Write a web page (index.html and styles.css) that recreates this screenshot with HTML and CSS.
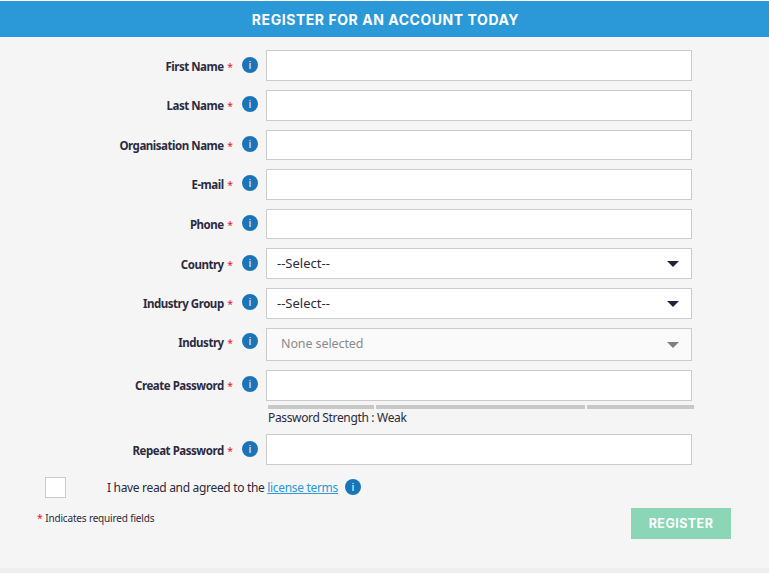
FILE: index.html
```html
<!DOCTYPE html>
<html lang="en">
<head>
<meta charset="utf-8">
<title>Register</title>
<link rel="stylesheet" href="styles.css">
</head>
<body>
<main class="panel">
  <h1 class="title">REGISTER FOR AN ACCOUNT TODAY</h1>
  <form class="form">
    <div class="row"><label class="label">First Name <span class="req">*</span></label><span class="info">i</span><input class="field" type="text"></div>
    <div class="row"><label class="label">Last Name <span class="req">*</span></label><span class="info">i</span><input class="field" type="text"></div>
    <div class="row"><label class="label">Organisation Name <span class="req">*</span></label><span class="info">i</span><input class="field" type="text"></div>
    <div class="row"><label class="label">E-mail <span class="req">*</span></label><span class="info">i</span><input class="field" type="text"></div>
    <div class="row"><label class="label">Phone <span class="req">*</span></label><span class="info">i</span><input class="field" type="text"></div>
    <div class="row"><label class="label">Country <span class="req">*</span></label><span class="info">i</span><div class="field select">--Select--<span class="caret"></span></div></div>
    <div class="row"><label class="label">Industry Group <span class="req">*</span></label><span class="info">i</span><div class="field select">--Select--<span class="caret"></span></div></div>
    <div class="row row-disabled"><label class="label">Industry <span class="req">*</span></label><span class="info">i</span><div class="field select disabled">None selected<span class="caret"></span></div></div>
    <div class="row row-pass"><label class="label">Create Password <span class="req">*</span></label><span class="info">i</span>
      <div class="pass-col">
        <input class="field" type="password">
        <div class="meter"><span class="bar bar-a"></span><span class="bar bar-b"></span><span class="bar bar-c"></span></div>
        <div class="strength">Password Strength : Weak</div>
      </div>
    </div>
    <div class="row"><label class="label">Repeat Password <span class="req">*</span></label><span class="info">i</span><input class="field" type="password"></div>
    <div class="terms">
      <span class="check"></span>
      <span class="terms-text">I have read and agreed to the <a class="link" href="#">license terms</a></span>
      <span class="info">i</span>
    </div>
    <div class="foot">
      <p class="note"><span class="req">*</span> Indicates required fields</p>
      <button class="submit" type="button">REGISTER</button>
    </div>
  </form>
</main>
<div class="strip"></div>
</body>
</html>
```

FILE: styles.css
```css
* { box-sizing: border-box; }
html, body { margin: 0; padding: 0; }
body {
  width: 769px;
  height: 573px;
  overflow: hidden;
  background: #fff;
  font-family: "Noto Sans", "Open Sans", sans-serif;
  color: #2b2b3a;
}
.panel {
  margin-top: 1px;
  height: 567px;
  background: #f5f5f5;
}
.title {
  margin: 0;
  height: 36px;
  padding-left: 2px;
  line-height: 37px;
  background: #2b98d8;
  color: #fff;
  text-align: center;
  font-family: Inter, "Liberation Sans", sans-serif;
  font-size: 14px;
  font-weight: 700;
  letter-spacing: 0.55px;
}
.form { padding-top: 13.4px; }
.row {
  display: flex;
  align-items: flex-start;
  height: 39.6px;
}
.row-disabled { height: 42.4px; }
.row-pass { height: 64.4px; }
.label {
  width: 233px;
  padding-top: 7.3px;
  text-align: right;
  font-size: 11.5px;
  line-height: 18px;
  font-weight: 700;
  letter-spacing: -0.47px;
  color: #2b2b40;
}
.req { margin-left: 1px; color: #e8141c; font-weight: 400; font-size: 10.5px; letter-spacing: 0; }
.info {
  flex: none;
  width: 16px;
  height: 16px;
  margin: 6.2px 8px 0 9px;
  border-radius: 50%;
  background: #1a75b8;
  color: #fff;
  text-align: center;
  font-size: 11px;
  line-height: 16px;
}
.row-disabled .info { margin-top: 5.6px; }
.row-pass .info { margin-top: 6px; }
.row-disabled .label { padding-top: 6.4px; }
.field {
  display: block;
  width: 426px;
  height: 30.6px;
  margin: 0;
  padding: 0 10px;
  border: 1px solid #cbcbcb;
  border-radius: 0;
  background: #fff;
  outline: none;
}
.select {
  position: relative;
  height: 31px;
  font-size: 13px;
  line-height: 29px;
  color: #2b2b3a;
}
.disabled {
  height: 33px;
  padding-left: 14px;
  background: #fafafa;
  line-height: 30px;
  font-size: 12.5px;
  letter-spacing: -0.1px;
  color: #8a8a8a;
}
.caret {
  position: absolute;
  right: 12px;
  top: 12px;
  width: 0;
  height: 0;
  border-left: 6px solid transparent;
  border-right: 6px solid transparent;
  border-top: 6px solid #23233a;
}
.disabled .caret { top: 13px; border-top-color: #7f7f88; }
.pass-col { width: 428px; }
.meter {
  display: flex;
  gap: 2px;
  margin: 4.4px 0 0 2px;
  width: 426px;
}
.bar { display: block; height: 4px; background: #c8c8c8; }
.bar-a { width: 106px; }
.bar-b { width: 209px; }
.bar-c { width: 107px; }
.strength {
  margin: 1px 0 0 2px;
  font-size: 12px;
  line-height: 16px;
  letter-spacing: -0.35px;
  word-spacing: 0.1px;
}
.terms {
  display: flex;
  align-items: flex-start;
  height: 31px;
  margin-top: 3px;
  padding-left: 45px;
  font-size: 12px;
}
.check {
  flex: none;
  width: 21px;
  height: 21px;
  margin-right: 41px;
  background: #fff;
  border: 1px solid #cbcbcb;
}
.terms-text { padding-top: 1px; line-height: 20px; letter-spacing: -0.32px; }
.terms .info { margin: 2px 0 0 7px; }
.link { color: #2b98d8; }
.foot {
  display: flex;
  justify-content: space-between;
  align-items: flex-start;
  padding: 0 38px 0 36px;
}
.note { margin: 2px 0 0; font-size: 10px; line-height: 16px; letter-spacing: -0.17px; }
.submit {
  width: 100px;
  height: 31px;
  margin-top: 0;
  padding: 0;
  border: 0;
  background: #8ad6b6;
  color: #fff;
  font-family: Inter, "Liberation Sans", sans-serif;
  font-size: 12.5px;
  font-weight: 700;
  letter-spacing: 0.45px;
}
.strip { height: 5px; background: #eeeeee; }
```
